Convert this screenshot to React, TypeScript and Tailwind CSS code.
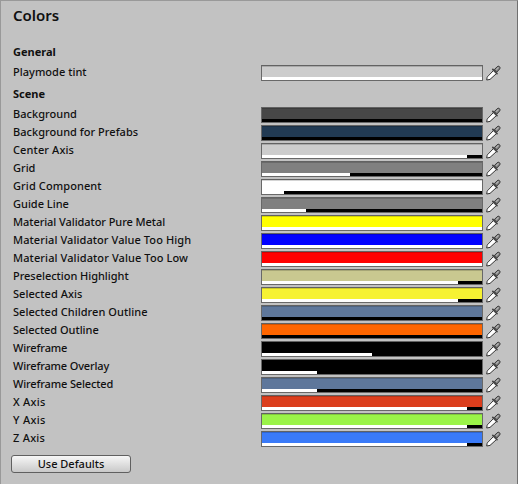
type Swatch = { label: string; color: string; alpha: number; tracking: number };

const general: Swatch[] = [{ label: "Playmode tint", color: "#cccccc", alpha: 1, tracking: 0.03 }];

const scene: Swatch[] = [
  { label: "Background", color: "#474747", alpha: 0, tracking: 0.03 },
  { label: "Background for Prefabs", color: "#213a53", alpha: 0, tracking: 0.03 },
  { label: "Center Axis", color: "#cccccc", alpha: 0.93, tracking: 0.12 },
  { label: "Grid", color: "#808080", alpha: 0.4, tracking: 0 },
  { label: "Grid Component", color: "#ffffff", alpha: 0.1, tracking: 0.1 },
  { label: "Guide Line", color: "#808080", alpha: 0.2, tracking: 0 },
  { label: "Material Validator Pure Metal", color: "#ffff00", alpha: 1, tracking: -0.07 },
  { label: "Material Validator Value Too High", color: "#0000ff", alpha: 1, tracking: 0.08 },
  { label: "Material Validator Value Too Low", color: "#ff0000", alpha: 1, tracking: 0.1 },
  { label: "Preselection Highlight", color: "#c9c890", alpha: 0.89, tracking: -0.03 },
  { label: "Selected Axis", color: "#f6f232", alpha: 0.89, tracking: 0.05 },
  { label: "Selected Children Outline", color: "#5e779b", alpha: 0, tracking: 0.05 },
  { label: "Selected Outline", color: "#ff6600", alpha: 0, tracking: -0.03 },
  { label: "Wireframe", color: "#000000", alpha: 0.5, tracking: -0.13 },
  { label: "Wireframe Overlay", color: "#000000", alpha: 0.25, tracking: -0.16 },
  { label: "Wireframe Selected", color: "#5e779b", alpha: 0.25, tracking: -0.14 },
  { label: "X Axis", color: "#db3e1d", alpha: 0.93, tracking: 0.25 },
  { label: "Y Axis", color: "#9af348", alpha: 0.93, tracking: 0.3 },
  { label: "Z Axis", color: "#3a7af8", alpha: 0.93, tracking: 0.25 },
];

function Eyedropper() {
  return (
    <svg className="ml-[3px] shrink-0" width="15" height="16" viewBox="0 0 15 16" aria-hidden="true">
      <path d="M.7 15 1.2 12.1 7.5 5.5 10.5 8.5 4 14.4Z" fill="#fff" stroke="#333" strokeWidth="1" strokeLinejoin="round" />
      <path d="M2.6 12.6 8.2 7.1" stroke="#fff" strokeWidth="1.6" strokeLinecap="round" />
      <path d="M8.2 4.7 11.2 1.7Q12.2.8 13.3 1.5T13.8 3.8L10.8 7.1Z" fill="#858585" stroke="#333" strokeWidth="1" />
      <path d="M6.8 4.4 11 8.7" fill="none" stroke="#444" strokeWidth="1.7" strokeLinecap="round" />
      <path d="M10.3 4.6 12.5 2.4" stroke="#b5b5b5" strokeWidth="1.1" />
    </svg>
  );
}

function Row({ label, color, alpha, tracking }: Swatch) {
  return (
    <div className="flex h-[18px] items-center pl-[12px]">
      <span className="w-[248px] shrink-0 pb-[2px] leading-[16px] whitespace-nowrap" style={{ letterSpacing: tracking }}>{label}</span>
      <div className="flex h-4 w-[222px] shrink-0 flex-col border border-[#686868] border-t-[#626262]">
        <div className="h-[11px] shadow-[inset_0_1px_0_rgba(0,0,0,0.17)]" style={{ backgroundColor: color }} />
        <div className="h-[3px] bg-black">
          <div className="h-full bg-white" style={{ width: `${alpha * 100}%` }} />
        </div>
      </div>
      <Eyedropper />
    </div>
  );
}

export default function App() {
  return (
    <main className="h-[484px] w-[518px] overflow-hidden border-t border-r border-l border-[#999] border-r-[#707070] bg-[#c2c2c2] font-['Noto_Sans','Lucida_Grande',sans-serif] text-[11px] leading-[18px] font-medium text-[#101010]">
      <h1 className="h-[42px] pt-[4px] pl-[12px] text-[15px] leading-[20px] font-semibold">Colors</h1>
      <h2 className="h-[21px] pl-[12px] font-bold">General</h2>
      {general.map((s) => <Row key={s.label} {...s} />)}
      <h2 className="mt-[3px] h-[21px] pl-[12px] font-bold">Scene</h2>
      {scene.map((s) => <Row key={s.label} {...s} />)}
      <button className="mt-[7px] ml-[10px] flex h-[18px] w-[120px] items-center justify-center rounded-[3px] border border-[#606060] bg-linear-to-b from-[#f7f7f7] to-[#c9c9c9]">
        Use Defaults
      </button>
    </main>
  );
}
